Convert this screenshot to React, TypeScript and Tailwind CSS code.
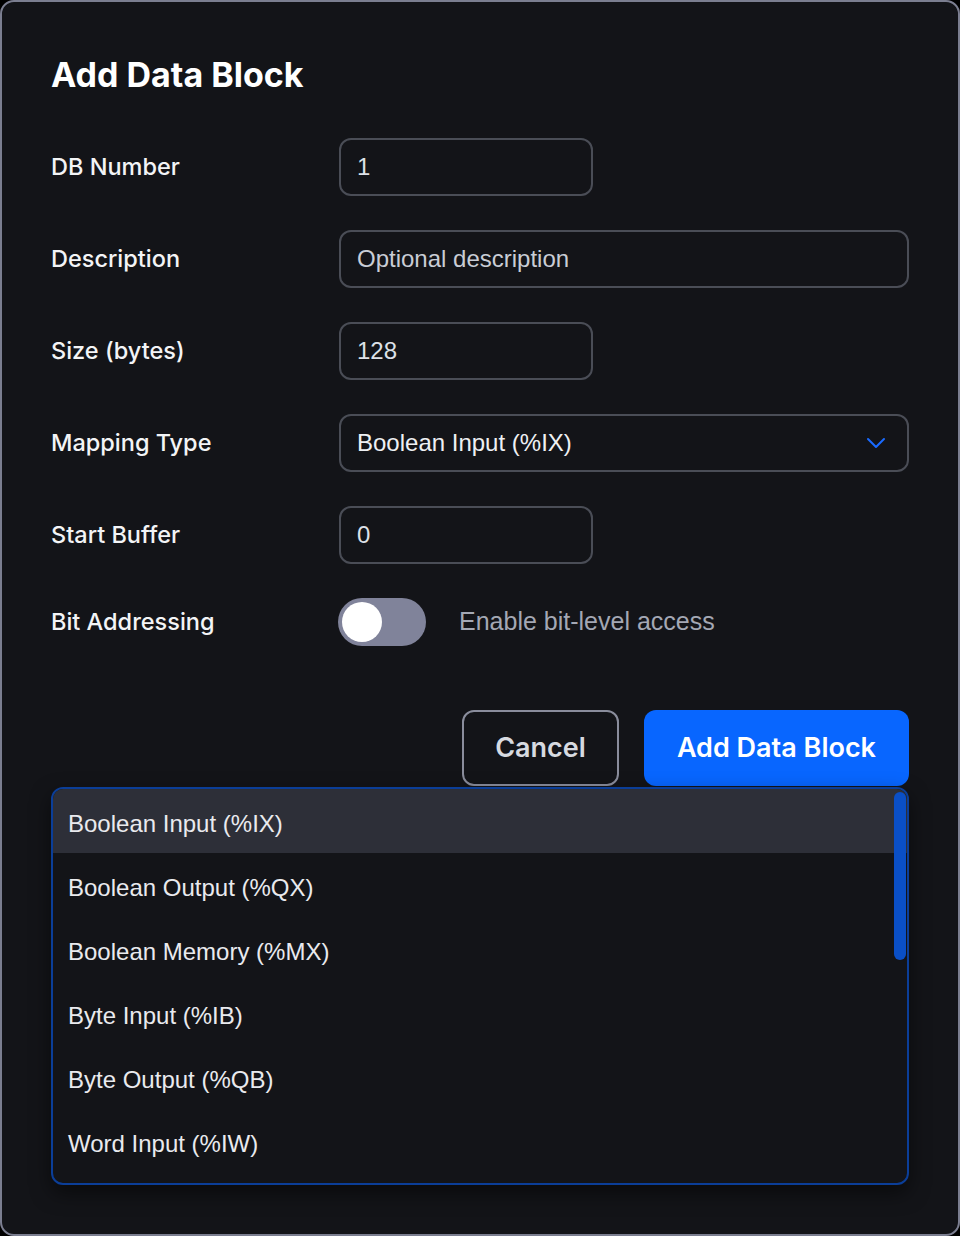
import * as React from "react";

const labelCls = "w-[288px] shrink-0 font-['Inter',sans-serif] text-[23.5px] font-medium text-[#f3f4f6]";
const fieldCls =
  "flex h-[58px] items-center rounded-[12px] border-2 border-[#4a4d56] bg-[#131418] px-[16px] font-['Liberation_Sans',Arial,sans-serif] text-[24px]";

const options = [
  "Boolean Input (%IX)",
  "Boolean Output (%QX)",
  "Boolean Memory (%MX)",
  "Byte Input (%IB)",
  "Byte Output (%QB)",
  "Word Input (%IW)",
];

function Row({ label, children }: { label: string; children: React.ReactNode }) {
  return (
    <div className="flex h-[58px] items-center">
      <span className={labelCls}>{label}</span>
      {children}
    </div>
  );
}

export default function App() {
  return (
    <div className="min-h-screen bg-black">
      <div className="relative h-[1236px] rounded-[14px] border-2 border-[#7b7e90] bg-[#131418] px-[49px] pt-[53px]">
        <h1 className="font-['Inter',sans-serif] text-[34px] font-bold leading-[40px] text-white">
          Add Data Block
        </h1>

        <div className="mt-[43px] flex flex-col gap-[34px]">
          <Row label="DB Number">
            <div className={fieldCls + " w-[254px] text-[#dde1e7]"}>1</div>
          </Row>
          <Row label="Description">
            <div className={fieldCls + " w-[570px] text-[#c9cdd5]"}>Optional description</div>
          </Row>
          <Row label="Size (bytes)">
            <div className={fieldCls + " w-[254px] text-[#dde1e7]"}>128</div>
          </Row>
          <Row label="Mapping Type">
            <div className={fieldCls + " w-[570px] justify-between pr-[21px] text-[#eef0f3]"}>
              <span>Boolean Input (%IX)</span>
              <svg width="20" height="12" viewBox="0 0 20 12" fill="none">
                <polyline points="2,2 10,10 18,2" stroke="#1a6bff" strokeWidth="2" strokeLinecap="round" strokeLinejoin="round" />
              </svg>
            </div>
          </Row>
          <Row label="Start Buffer">
            <div className={fieldCls + " w-[254px] text-[#dde1e7]"}>0</div>
          </Row>
          <div className="flex h-[48px] items-center">
            <span className={labelCls}>Bit Addressing</span>
            <div className="ml-[-1px] flex h-[48px] w-[88px] items-center rounded-full bg-[#80839a] px-[4px]">
              <div className="size-[40px] rounded-full bg-white" />
            </div>
            <span className="ml-[33px] font-['Liberation_Sans',Arial,sans-serif] text-[25px] text-[#a4a8b4]">
              Enable bit-level access
            </span>
          </div>
        </div>

        <div className="mt-[64px] flex justify-end gap-[25px] font-['Inter',sans-serif] text-[27px] font-semibold">
          <button className="h-[76px] rounded-[12px] border-2 border-[#8a8d9c] px-[31px] text-[#d7dae0]">
            Cancel
          </button>
          <button className="h-[76px] rounded-[12px] border-2 border-transparent bg-[#0866ff] px-[31px] text-white">
            Add Data Block
          </button>
        </div>

        <div className="absolute left-[49px] right-[49px] top-[785px] h-[398px] overflow-hidden rounded-[12px] border-2 border-[#0b3e98] bg-[#131418] shadow-[0_8px_20px_rgba(0,0,0,0.5)]">
          {options.map((o, i) => (
            <div
              key={o}
              className={
                "flex h-[64px] items-center pl-[15px] pt-[5px] font-['Liberation_Sans',Arial,sans-serif] text-[24px] text-[#e9eaee] " +
                (i === 0 ? "bg-[#2d2f38]" : "")
              }
            >
              {o}
            </div>
          ))}
          <div className="absolute right-[1px] top-[3px] h-[168px] w-[12px] rounded-full bg-[#0a4fc6]" />
        </div>
      </div>
    </div>
  );
}
